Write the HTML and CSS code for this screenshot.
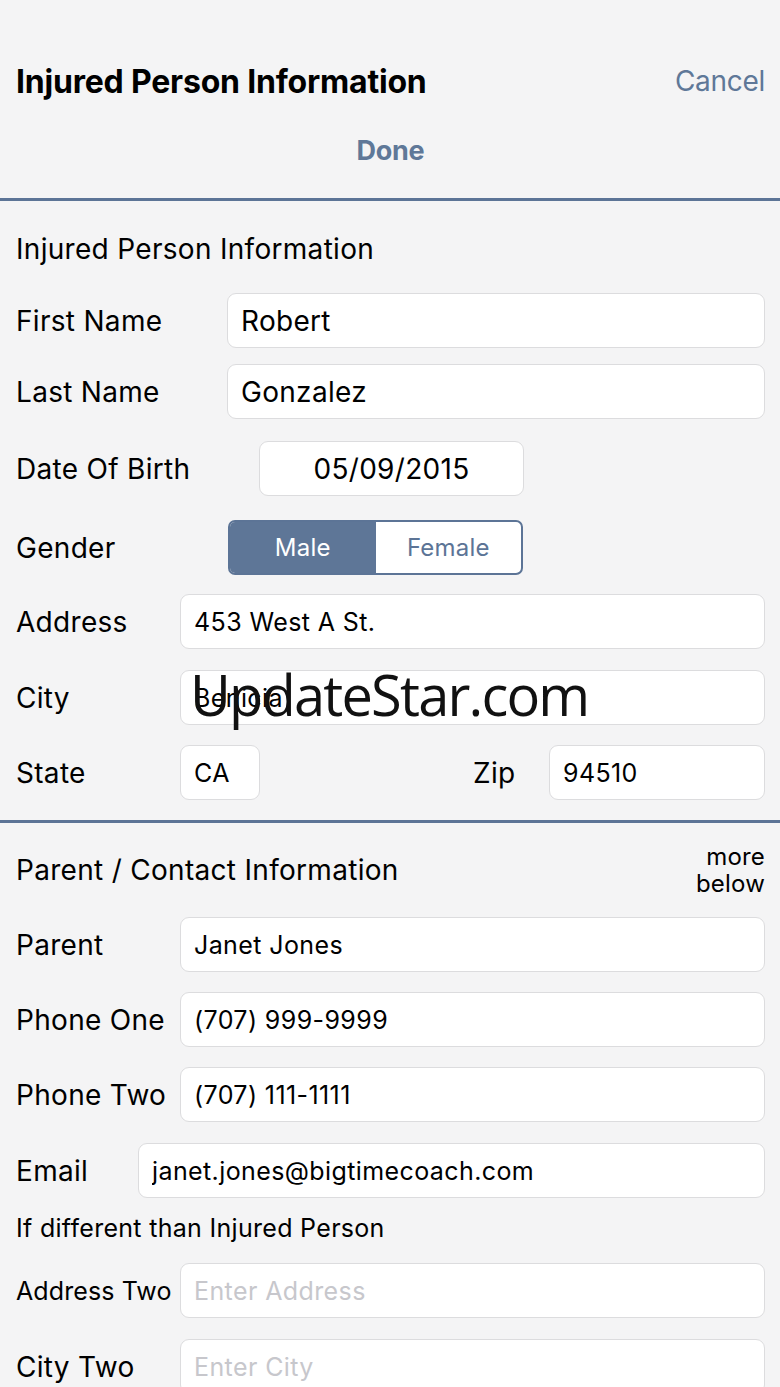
FILE: index.html
```html
<!DOCTYPE html>
<html lang="en">
<head>
    <meta charset="UTF-8">
    <meta name="viewport" content="width=device-width, initial-scale=1.0">
    <title>Injured Person Information</title>
    <link rel="stylesheet" href="styles.css">
</head>
<body>
    <div class="screen">
        <div class="nav">
            <div class="nav-top">
                <h1>Injured Person Information</h1>
                <button class="link-btn">Cancel</button>
            </div>
            <button class="done-btn">Done</button>
        </div>

        <div class="section">
            <div class="section-title">Injured Person Information</div>

            <div class="row first">
                <label class="label w-name">First Name</label>
                <input class="field" type="text" value="Robert">
            </div>
            <div class="row gap-16">
                <label class="label w-name">Last Name</label>
                <input class="field" type="text" value="Gonzalez">
            </div>
            <div class="row gap-22">
                <label class="label w-dob">Date Of Birth</label>
                <input class="field date" type="text" value="05/09/2015">
            </div>
            <div class="row gap-24">
                <label class="label w-gender">Gender</label>
                <div class="segment">
                    <button class="seg active">Male</button>
                    <button class="seg">Female</button>
                </div>
            </div>
            <div class="row gap-19">
                <label class="label w-addr">Address</label>
                <input class="field small" type="text" value="453 West A St.">
            </div>
            <div class="row gap-21">
                <label class="label w-addr">City</label>
                <input class="field small" type="text" value="Benicia">
            </div>
            <div class="row gap-20">
                <label class="label w-addr">State</label>
                <input class="field small state" type="text" value="CA">
                <label class="label zip-label">Zip</label>
                <input class="field small zip" type="text" value="94510">
            </div>
        </div>

        <div class="section contact">
            <div class="section-head">
                <div class="section-title">Parent / Contact Information</div>
                <div class="more">more<br>below</div>
            </div>

            <div class="row gap-20">
                <label class="label w-addr">Parent</label>
                <input class="field small" type="text" value="Janet Jones">
            </div>
            <div class="row gap-20">
                <label class="label w-addr">Phone One</label>
                <input class="field small" type="text" value="(707) 999-9999">
            </div>
            <div class="row gap-20">
                <label class="label w-addr">Phone Two</label>
                <input class="field small" type="text" value="(707) 111-1111">
            </div>
            <div class="row gap-21">
                <label class="label w-email">Email</label>
                <input class="field small" type="text" value="janet.jones@bigtimecoach.com">
            </div>
            <div class="note">If different than Injured Person</div>
            <div class="row gap-19">
                <label class="label w-addr label-sm">Address Two</label>
                <input class="field small" type="text" placeholder="Enter Address">
            </div>
            <div class="row gap-21">
                <label class="label w-addr">City Two</label>
                <input class="field small" type="text" placeholder="Enter City">
            </div>
        </div>

        <div class="watermark">UpdateStar.com</div>
    </div>
</body>
</html>
```

FILE: styles.css
```css
body, html {
    margin: 0;
    padding: 0;
    background-color: #f4f4f5;
    font-family: Inter, Roboto, "Noto Sans", sans-serif;
    color: #000;
}

.screen {
    position: relative;
    width: 780px;
    height: 1387px;
    overflow: hidden;
}

/* top bar */
.nav {
    padding: 0 15px 0 16px;
    border-bottom: 3px solid #5c7496;
    display: flex;
    flex-direction: column;
}

.nav-top {
    display: flex;
    justify-content: space-between;
    align-items: center;
    height: 40px;
    margin-top: 61px;
}

.nav-top h1 {
    margin: 0;
    font-size: 32px;
    font-weight: 700;
    letter-spacing: -0.2px;
}

.link-btn,
.done-btn {
    background: none;
    border: none;
    padding: 0;
    font-family: inherit;
    color: #5f7898;
    cursor: pointer;
}

.link-btn {
    font-size: 28px;
    letter-spacing: -0.3px;
}

.done-btn {
    align-self: center;
    height: 40px;
    margin: 29px 0 28px;
    font-size: 27px;
    font-weight: 700;
    letter-spacing: -0.3px;
}

/* form sections */
.section {
    padding: 31px 15px 20px 16px;
    display: flex;
    flex-direction: column;
}

.section + .section {
    border-top: 3px solid #5c7496;
    padding-top: 20px;
}

.section-title {
    font-size: 28px;
    line-height: 34px;
    letter-spacing: 0.3px;
}

.section-head {
    display: flex;
    justify-content: space-between;
    align-items: center;
}

.more {
    font-size: 24px;
    line-height: 27px;
    text-align: right;
    letter-spacing: 0.2px;
}

.row {
    display: flex;
    align-items: center;
    height: 55px;
}

.row.first { margin-top: 27px; }
.gap-16 { margin-top: 16px; }
.gap-19 { margin-top: 19px; }
.gap-20 { margin-top: 20px; }
.gap-21 { margin-top: 21px; }
.gap-22 { margin-top: 22px; }
.gap-24 { margin-top: 24px; }

.label {
    flex-shrink: 0;
    font-size: 28px;
    letter-spacing: 0.3px;
}

.label-sm {
    font-size: 25px;
    letter-spacing: 0.1px;
}

.w-name { width: 211px; }
.w-dob { width: 243px; }
.w-gender { width: 212px; }
.w-addr { width: 164px; }
.w-email { width: 122px; }

.field {
    flex-grow: 1;
    min-width: 0;
    height: 55px;
    box-sizing: border-box;
    padding: 0 13px;
    border: 1px solid #dcdcde;
    border-radius: 9px;
    background-color: #fff;
    font-family: inherit;
    font-size: 28px;
    letter-spacing: 0.3px;
    color: #000;
    outline: none;
}

.field.small {
    font-size: 25px;
    letter-spacing: 0.4px;
}

.field::placeholder {
    color: #c7c7cc;
}

.field.date {
    flex-grow: 0;
    width: 265px;
    text-align: center;
}

.field.state {
    flex-grow: 0;
    width: 80px;
}

.zip-label {
    margin-left: auto;
    width: 76px;
}

.field.zip {
    flex-grow: 0;
    width: 216px;
}

/* gender switch */
.segment {
    display: flex;
    width: 295px;
    height: 55px;
    box-sizing: border-box;
    border: 2px solid #5c7496;
    border-radius: 7px;
    overflow: hidden;
    background-color: #fff;
}

.seg {
    flex: 1;
    border: none;
    background: none;
    font-family: inherit;
    font-size: 24px;
    letter-spacing: 0.2px;
    color: #5c7496;
    cursor: pointer;
}

.seg.active {
    background-color: #5e7697;
    color: #fff;
}

.note {
    margin-top: 14px;
    font-size: 25px;
    line-height: 32px;
    letter-spacing: 0.3px;
}

.watermark {
    position: absolute;
    left: 190px;
    top: 656px;
    font-family: "Open Sans", sans-serif;
    font-size: 56px;
    color: #111;
    letter-spacing: -1.8px;
    pointer-events: none;
}
```
